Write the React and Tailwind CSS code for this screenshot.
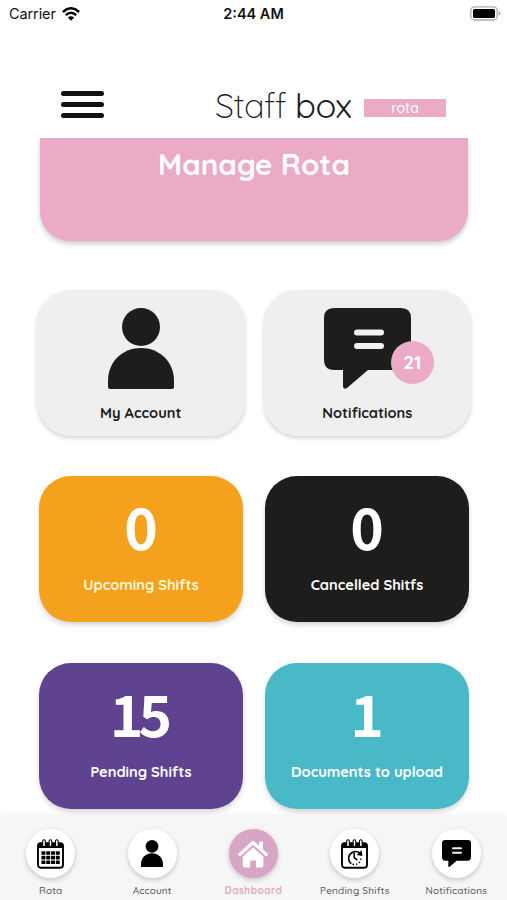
import React from 'react';

const STATS = [
    { value: '0', label: 'Upcoming Shifts', color: 'bg-[#f4a21d]', text: 'text-[#fff6d8]' },
    { value: '0', label: 'Cancelled Shitfs', color: 'bg-[#1d1d1b]', text: 'text-white' },
    { value: '15', label: 'Pending Shifts', color: 'bg-[#5f4391]', text: 'text-white' },
    { value: '1', label: 'Documents to upload', color: 'bg-[#49b9c8]', text: 'text-white' },
];

const WifiIcon = () => (
    <svg width="18" height="14" viewBox="0 0 18 14" fill="none" stroke="#000" strokeWidth="2.5">
        <path d="M0.9 5Q9 -2.4 17.1 5" />
        <path d="M3.8 8.1Q9 3.4 14.2 8.1" />
        <path d="M9 13.8L5.9 10.6Q9 8 12.1 10.6Z" fill="#000" stroke="none" />
    </svg>
);

const BatteryIcon = () => (
    <svg width="31" height="16" viewBox="0 0 31 16">
        <rect x="0.8" y="0.8" width="26.4" height="13.2" rx="3.8" fill="#fff" stroke="#aaa" strokeWidth="1.3" />
        <rect x="3" y="3" width="22" height="9" rx="1.6" fill="#000" />
        <path d="M28.6 5.2Q30.6 5.8 30.6 7.4Q30.6 9 28.6 9.6Z" fill="#aaa" />
    </svg>
);

const PersonIcon = ({ className, color = '#1d1d1b' }) => (
    <svg className={className} viewBox="0 0 66 81" fill={color}>
        <circle cx="33" cy="19" r="19" />
        <path d="M0 73C0 53 15 40 33 40S66 53 66 73V79Q66 81 64 81H2Q0 81 0 79Z" />
    </svg>
);

const ChatIcon = ({ className, color = '#1d1d1b' }) => (
    <svg className={className} viewBox="0 0 87 81" fill={color}>
        <path d="M10 0H77Q87 0 87 10V51Q87 62 77 62H44L23 80Q19 82 19 78V62H10Q0 62 0 51V10Q0 0 10 0Z" />
        <path d="M33 24.5H57M33 38H57" stroke="#f2f2f2" strokeWidth="6" strokeLinecap="round" />
    </svg>
);

const CalendarFrame = ({ children }) => (
    <svg width="27" height="30" viewBox="0 0 27 30">
        <rect x="1" y="4.3" width="25" height="24.4" rx="2.6" fill="#fff" stroke="#000" strokeWidth="1.9" />
        <path d="M1 9V6Q1 4 3 4H24Q26 4 26 6V9Z" fill="#000" />
        <g fill="#fff" stroke="#000" strokeWidth="1.1">
            <rect x="5.7" y="0.8" width="2.7" height="7" rx="1.35" />
            <rect x="12.1" y="0.8" width="2.7" height="7" rx="1.35" />
            <rect x="18.5" y="0.8" width="2.7" height="7" rx="1.35" />
        </g>
        {children}
    </svg>
);

const CalendarIcon = () => (
    <CalendarFrame>
        {[12.2, 16.8, 21.4].map((y) =>
            [4.4, 9.2, 14, 18.8].map((x) => <rect key={`${x}-${y}`} x={x} y={y} width="4" height="3.6" rx="0.6" />)
        )}
    </CalendarFrame>
);

const PendingIcon = () => (
    <CalendarFrame>
        <path d="M10.2 24.8A6.8 6.8 0 1 1 18.8 14" fill="none" stroke="#000" strokeWidth="1.7" />
        <path d="M20.6 11.2L21.4 17L15.6 16Z" />
        <path d="M13.2 14V18.7L16.3 21" fill="none" stroke="#000" strokeWidth="1.6" />
        <path d="M11.5 25.3Q19.5 26.5 20 18.5" fill="none" stroke="#000" strokeWidth="1.4" strokeDasharray="1.4 2" />
    </CalendarFrame>
);

const HomeIcon = () => (
    <svg width="30" height="28" viewBox="0 0 30 28">
        <path d="M21 1.7H25V10L21 6.5Z" fill="#fff" />
        <path d="M4.8 16.7L15 7.3L25.4 16.7V25.5Q25.4 27.5 23.4 27.5H18V20.5H12.3V27.5H6.8Q4.8 27.5 4.8 25.5Z" fill="#fff" />
        <path d="M2.5 17L15 5.7L27.5 17" fill="none" stroke="#d8a6c5" strokeWidth="1.3" />
        <path d="M1.8 14.5L15 2.5L28.2 14.5" fill="none" stroke="#fff" strokeWidth="3.2" strokeLinecap="round" strokeLinejoin="round" />
    </svg>
);

const TABS = [
    { label: 'Rota', icon: <CalendarIcon />, tracking: 'tracking-[0.2px]' },
    { label: 'Account', icon: <PersonIcon className="w-[22px] h-[27px]" color="#000" />, tracking: 'tracking-[0.05px]' },
    { label: 'Dashboard', icon: <HomeIcon />, active: true, tracking: 'tracking-[0.5px]' },
    { label: 'Pending Shifts', icon: <PendingIcon />, tracking: 'tracking-[0.2px]' },
    { label: 'Notifications', icon: <ChatIcon className="w-[29px] h-[27px]" color="#000" />, tracking: 'tracking-[0.2px]' },
];

const StatusBar = () => (
    <div className="grid h-7 grid-cols-3 items-center pl-[9px] pr-[6px] font-['Inter'] text-[14.5px] text-[#111]">
        <div className="flex items-center gap-[6px]">
            <span className="tracking-[-0.1px]">Carrier</span>
            <WifiIcon />
        </div>
        <span className="pr-[3px] text-center font-semibold">2:44 AM</span>
        <div className="flex justify-end"><BatteryIcon /></div>
    </div>
);

const Header = () => (
    <header className="flex h-[110px] pl-[61px] pt-[63px]">
        <button className="flex h-[27px] w-[43px] flex-col justify-between" aria-label="Menu">
            <span className="h-[5px] w-full rounded-full bg-[#111]" />
            <span className="h-[5px] w-full rounded-full bg-[#111]" />
            <span className="h-[5px] w-full rounded-full bg-[#111]" />
        </button>
        <div className="ml-[111px] flex w-[149px] gap-[9px] whitespace-nowrap text-[34.5px] leading-[28px] text-[#1d1d1b]">
            <span className="font-light tracking-[-0.5px]">Staff</span>
            <span className="font-normal tracking-[-0.6px]">box</span>
        </div>
        <div className="mt-[8px] flex h-[18px] w-[82px] items-center justify-center bg-[#ebaac5] text-[14px] font-medium leading-none text-white">
            rota
        </div>
    </header>
);

const ActionCard = ({ label, children }) => (
    <div className="flex h-[146px] flex-col items-center rounded-[34px] bg-[#efefef] pt-[18px] shadow-[0_2px_4px_rgba(0,0,0,0.18)]">
        <div className="relative h-[81px]">{children}</div>
        <span className="mt-[14px] text-[14.6px] font-bold leading-5 text-[#1d1d1b]">{label}</span>
    </div>
);

const StatCard = ({ value, label, color, text }) => (
    <div className={`flex h-[146px] flex-col items-center rounded-[32px] pt-[21px] shadow-[0_3px_5px_rgba(0,0,0,0.16)] ${color}`}>
        <span className="-ml-[5px] h-[56px] font-['Noto_Sans_CJK_SC',sans-serif] text-[57px] font-bold leading-[56px] tracking-[-5px] text-white">{value}</span>
        <span className={`mt-[22px] text-[14.6px] font-bold leading-5 ${text}`}>{label}</span>
    </div>
);

const TabBar = () => (
    <nav className="grid h-[85px] shrink-0 grid-cols-5 bg-[#f6f6f6] pt-[14px] shadow-[0_-2px_6px_rgba(0,0,0,0.03)]">
        {TABS.map(({ label, icon, active, tracking }) => (
            <div key={label} className="flex flex-col items-center">
                <div className={`flex size-[49px] shrink-0 items-center justify-center rounded-full shadow-[0_2px_5px_rgba(0,0,0,0.2)] ${active ? 'bg-[#d8a6c5]' : 'bg-white'}`}>
                    {icon}
                </div>
                <span className={`mt-[7px] whitespace-nowrap text-[10px] leading-3 ${tracking} ${active ? 'font-bold text-[#dda9c5]' : 'font-medium text-[#555]'}`}>{label}</span>
            </div>
        ))}
    </nav>
);

const App = () => {
    return (
        <div className="flex h-[900px] w-[507px] flex-col overflow-hidden bg-white font-['Quicksand','Lato',sans-serif]">
            <StatusBar />
            <Header />
            <main className="h-[677px] shrink-0 overflow-hidden">
                <section className="ml-[40px] flex h-[103px] w-[428px] justify-center rounded-b-[30px] bg-[#ebaac5] pt-[8px] shadow-[0_3px_5px_rgba(0,0,0,0.2)]">
                    <h1 className="text-[29.5px] font-bold leading-9 text-white">Manage Rota</h1>
                </section>

                <section className="ml-[37px] mt-[49px] grid w-[434px] grid-cols-2 gap-[19px]">
                    <ActionCard label="My Account">
                        <PersonIcon className="h-[81px] w-[66px]" />
                    </ActionCard>
                    <ActionCard label="Notifications">
                        <ChatIcon className="h-[81px] w-[87px]" />
                        <span className="absolute left-[67px] top-[33px] flex size-[43px] items-center justify-center rounded-full bg-[#ebaac5] text-[19px] font-bold text-white">
                            21
                        </span>
                    </ActionCard>
                </section>

                <section className="ml-[39px] mt-[40px] grid w-[430px] grid-cols-2 gap-x-[22px] gap-y-[41px]">
                    {STATS.map((stat) => <StatCard key={stat.label} {...stat} />)}
                </section>
            </main>
            <TabBar />
        </div>
    );
};

export default App;
